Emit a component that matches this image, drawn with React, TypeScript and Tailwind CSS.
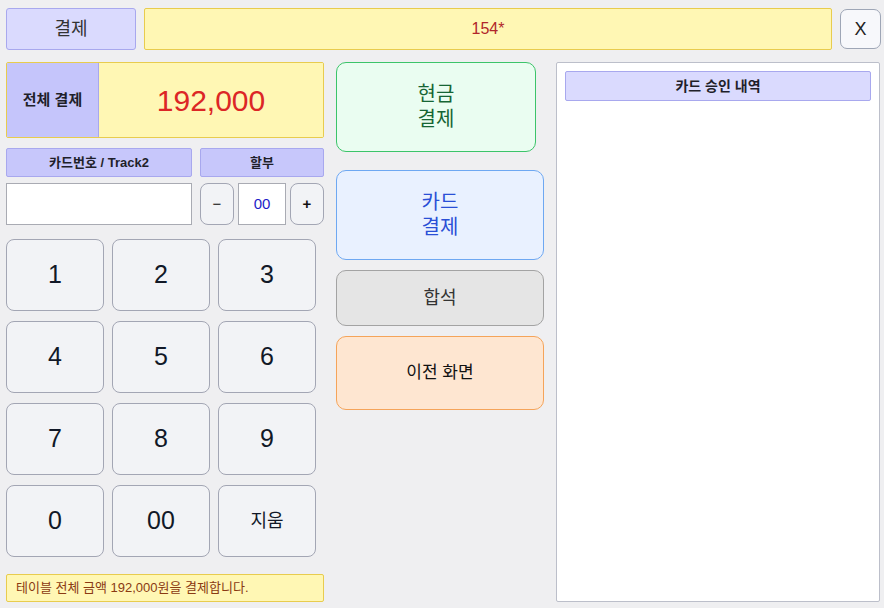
import React from "react";

const F = { fontFamily: '"Liberation Sans", "Noto Sans CJK KR", sans-serif' };

function Key({ label, small }: { label: string; small?: boolean }) {
  return (
    <div
      className={`flex items-center justify-center w-[98px] h-[72px] rounded-[8px] border border-[#a3a6b4] bg-[#f2f3f6] text-[#111827] ${
        small ? "text-[18px]" : "text-[25px]"
      }`}
    >
      {label}
    </div>
  );
}

export default function App() {
  const keys = ["1", "2", "3", "4", "5", "6", "7", "8", "9", "0", "00", "지움"];
  return (
    <div style={F} className="w-[884px] h-[608px] bg-[#efeff1] pl-[6px] pt-[8px] overflow-hidden">
      {/* top row */}
      <div className="flex items-start h-[42px]">
        <div className="w-[130px] h-[42px] flex items-center justify-center rounded-[3px] border border-[#a8a8ee] bg-[#dadafe] text-[18px] text-[#333]">
          결제
        </div>
        <div className="ml-[8px] w-[688px] h-[42px] flex items-center justify-center rounded-[2px] border border-[#e8cc4e] bg-[#fff7b4] text-[16px] text-[#b1262a]">
          154*
        </div>
        <div className="ml-[8px] mt-[1px] w-[41px] h-[40px] flex items-center justify-center rounded-[7px] border border-[#9ea6b6] bg-[#f7f8fb] text-[18px] text-[#222]">
          X
        </div>
      </div>

      <div className="flex mt-[12px] h-[540px]">
        {/* left column */}
        <div className="w-[318px] flex flex-col">
          <div className="h-[76px] flex rounded-[2px] border border-[#e8cc4e] overflow-hidden">
            <div className="w-[92px] bg-[#c5c5fb] border-r border-[#a8a8ee] flex items-center justify-center text-[15px] font-semibold text-[#1f1f2a]">
              전체 결제
            </div>
            <div className="flex-1 bg-[#fff7b4] flex items-center justify-center text-[30px] text-[#dc2626]">
              192,000
            </div>
          </div>

          <div className="flex mt-[10px] gap-[8px]">
            <div className="w-[186px] h-[29px] flex items-center justify-center rounded-[2px] border border-[#a8a8ee] bg-[#c7c7fb] text-[13px] font-bold text-[#1f1f2a]">
              카드번호 / Track2
            </div>
            <div className="w-[124px] h-[29px] flex items-center justify-center rounded-[2px] border border-[#a8a8ee] bg-[#c7c7fb] text-[13px] font-bold text-[#1f1f2a]">
              할부
            </div>
          </div>

          <div className="flex mt-[6px] h-[42px]">
            <div className="w-[186px] h-[42px] bg-white border border-[#a9abb3]" />
            <div className="ml-[8px] w-[34px] h-[42px] flex items-center justify-center rounded-[8px] border border-[#a3a6b4] bg-[#f2f3f6] text-[15px] text-[#111]">
              −
            </div>
            <div className="ml-[4px] w-[48px] h-[42px] flex items-center justify-center bg-white border border-[#a9abb3] text-[15px] text-[#1d1dc8]">
              00
            </div>
            <div className="ml-[4px] w-[34px] h-[42px] flex items-center justify-center rounded-[8px] border border-[#a3a6b4] bg-[#f2f3f6] text-[15px] font-bold text-[#111]">
              +
            </div>
          </div>

          <div className="grid grid-cols-[98px_98px_98px] gap-x-[8px] gap-y-[10px] mt-[14px]">
            {keys.map((k) => (
              <Key key={k} label={k} small={k === "지움"} />
            ))}
          </div>

          <div className="mt-[17px] h-[28px] flex items-center pl-[9px] rounded-[2px] border border-[#e8cc4e] bg-[#fff7b4] text-[13px] text-[#8a3a12]">
            테이블 전체 금액 192,000원을 결제합니다.
          </div>
        </div>

        {/* middle column */}
        <div className="ml-[12px] w-[208px] flex flex-col">
          <div className="w-[200px] h-[90px] flex flex-col items-center justify-center text-center rounded-[10px] border border-[#3cc46a] bg-[#eafdf1] text-[20px] leading-[25px] text-[#166534]">
            <span>현금</span>
            <span>결제</span>
          </div>
          <div className="mt-[18px] h-[90px] flex flex-col items-center justify-center text-center rounded-[10px] border border-[#6ea8f2] bg-[#e9f1ff] text-[20px] leading-[25px] text-[#2a4fd6]">
            <span>카드</span>
            <span>결제</span>
          </div>
          <div className="mt-[10px] h-[56px] flex items-center justify-center rounded-[10px] border border-[#a3a3a3] bg-[#e5e5e5] text-[18px] text-[#333]">
            합석
          </div>
          <div className="mt-[10px] h-[74px] flex items-center justify-center rounded-[10px] border border-[#f5a45a] bg-[#fee6d1] text-[17px] text-[#111]">
            이전 화면
          </div>
        </div>

        {/* right panel */}
        <div className="ml-[12px] w-[324px] h-[540px] bg-white border border-[#bcbfca] rounded-[2px] p-[8px]">
          <div className="h-[30px] flex items-center justify-center rounded-[2px] border border-[#a8a8ee] bg-[#dadafe] text-[14px] font-semibold text-[#1f1f2a]">
            카드 승인 내역
          </div>
        </div>
      </div>
    </div>
  );
}
